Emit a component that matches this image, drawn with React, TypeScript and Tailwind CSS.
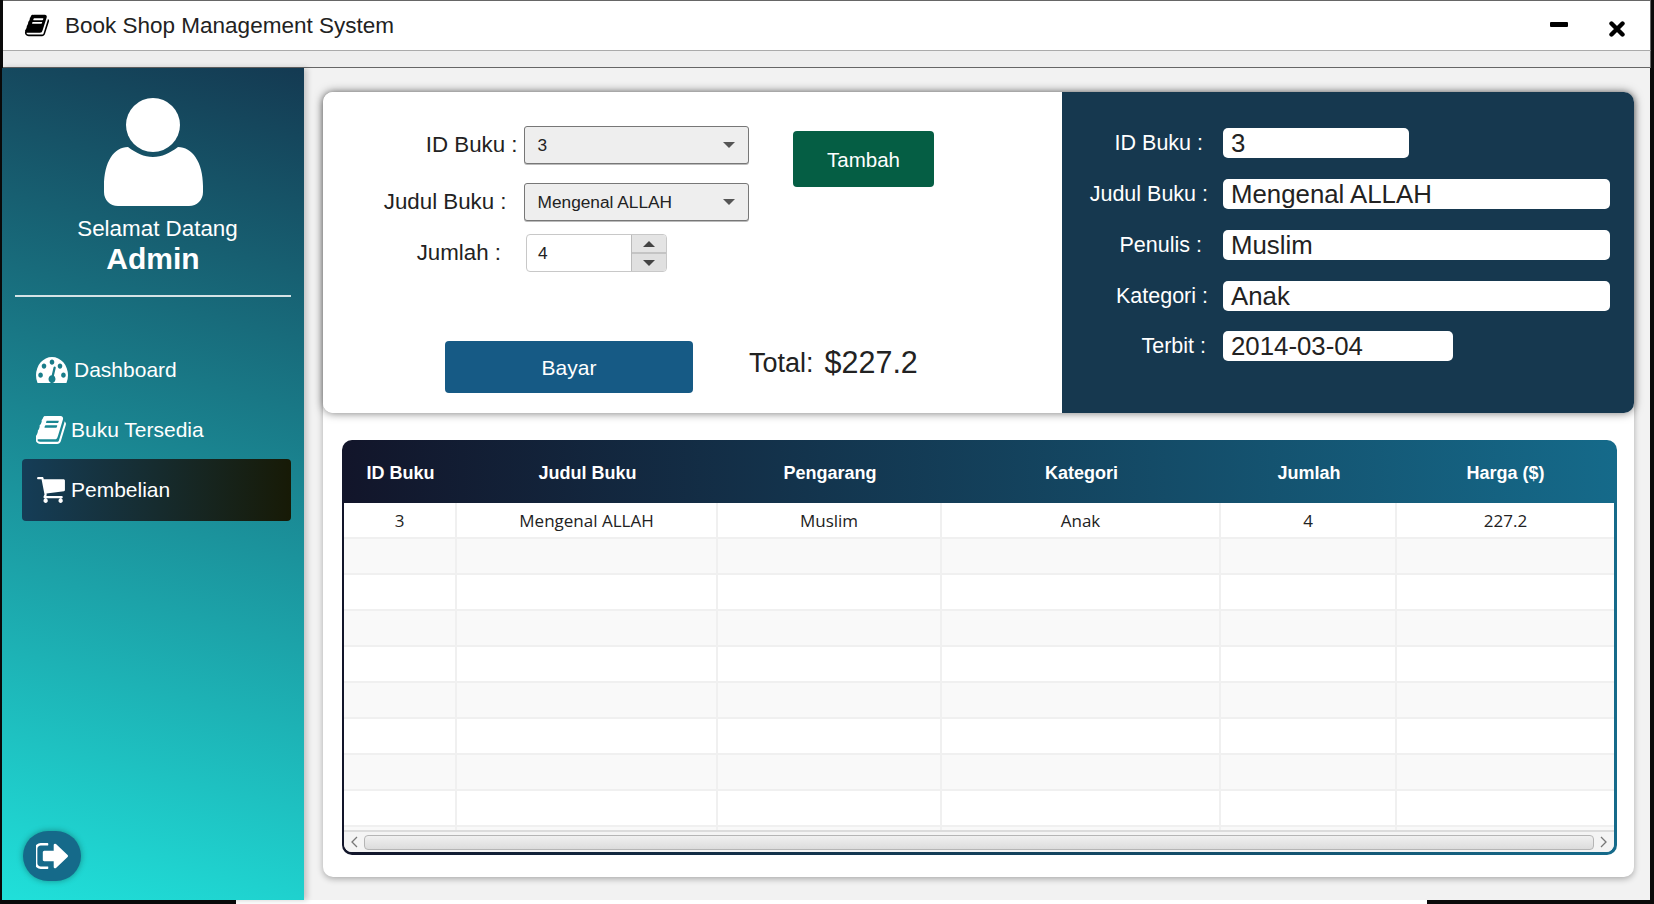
const fontSans = `font-['Liberation_Sans',Arial,sans-serif]`

const bookPath =
  'M1703 478q40 57 18 129l-275 906q-19 64-76.5 107.5t-122.5 43.5h-923q-77 0-148.5-53.5t-99.5-131.5q-24-67-2-127 0-4 3-27t4-37q1-8-3-21.5t-3-19.5q2-11 8-21t16.5-23.5 16.5-23.5q23-38 45-91.5t30-91.5q3-10 .5-30t-.5-28q3-11 17-28t17-23q21-36 42-92t25-90q1-9-2.5-32t.5-28q4-13 22-30.5t22-22.5q19-26 42.5-84.5t27.5-96.5q1-8-3-25.5t-2-26.5q2-8 9-18t18-23 17-21q8-12 16.5-30.5t15-35 16-36 19.5-32 26.5-23.5 36-11.5 47.5 5.5l-1 3q38-9 51-9h761q74 0 114 56t18 130l-274 906q-36 119-71.5 153.5t-128.5 34.5h-869q-27 0-38 15-11 16-1 43 24 70 144 70h923q29 0 56-15.5t35-41.5l300-987q7-22 5-57 38 15 59 43zm-1064 2q-4 13 2 22.5t20 9.5h608q13 0 25.5-9.5t16.5-22.5l21-64q4-13-2-22.5t-20-9.5h-608q-13 0-25.5 9.5t-16.5 22.5zm-83 256q-4 13 2 22.5t20 9.5h608q13 0 25.5-9.5t16.5-22.5l21-64q4-13-2-22.5t-20-9.5h-608q-13 0-25.5 9.5t-16.5 22.5z'
const dashboardPath =
  'M384 1152q0-53-37.5-90.5t-90.5-37.5-90.5 37.5-37.5 90.5 37.5 90.5 90.5 37.5 90.5-37.5 37.5-90.5zm192-448q0-53-37.5-90.5t-90.5-37.5-90.5 37.5-37.5 90.5 37.5 90.5 90.5 37.5 90.5-37.5 37.5-90.5zm428 481l101-382q6-26-7.5-48.5t-38.5-29.5-48 6.5-30 39.5l-101 382q-60 5-107 43.5t-63 98.5q-20 77 20 146t117 89 146-20 89-117q16-60-6-117t-72-91zm660-33q0-53-37.5-90.5t-90.5-37.5-90.5 37.5-37.5 90.5 37.5 90.5 90.5 37.5 90.5-37.5 37.5-90.5zm-640-640q0-53-37.5-90.5t-90.5-37.5-90.5 37.5-37.5 90.5 37.5 90.5 90.5 37.5 90.5-37.5 37.5-90.5zm448 192q0-53-37.5-90.5t-90.5-37.5-90.5 37.5-37.5 90.5 37.5 90.5 90.5 37.5 90.5-37.5 37.5-90.5zm320 448q0 261-141 483-19 29-54 29h-1402q-35 0-54-29-141-221-141-483 0-182 71-348t191-286 286-191 348-71 348 71 286 191 191 286 71 348z'
const cartPath =
  'M704 1536q0 52-38 90t-90 38-90-38-38-90 38-90 90-38 90 38 38 90zm896 0q0 52-38 90t-90 38-90-38-38-90 38-90 90-38 90 38 38 90zm128-1088v512q0 24-16.5 42.5t-40.5 21.5l-1044 122q13 60 13 70 0 16-24 64h920q26 0 45 19t19 45-19 45-45 19h-1024q-26 0-45-19t-19-45q0-11 8-31.5t16-36 21.5-40 15.5-29.5l-177-823h-204q-26 0-45-19t-19-45 19-45 45-19h256q16 0 28.5 6.5t19.5 15.5 13 24.5 8 26 5.5 29.5 4.5 26h1201q26 0 45 19t19 45z'
const signOutPath =
  'M704 1440q0 4 1 20t.5 26.5-3 23.5-10 19.5-20.5 6.5h-320q-119 0-203.5-84.5t-84.5-203.5v-704q0-119 84.5-203.5t203.5-84.5h320q13 0 22.5 9.5t9.5 22.5q0 4 1 20t.5 26.5-3 23.5-10 19.5-20.5 6.5h-320q-66 0-113 47t-47 113v704q0 66 47 113t113 47h312l11.5 1 11.5 3 8 5.5 7 9 2 13.5zm928-544q0 26-19 45l-544 544q-19 19-45 19t-45-19-19-45v-288h-448q-26 0-45-19t-19-45v-384q0-26 19-45t45-19h448v-288q0-26 19-45t45-19 45 19l544 544q19 19 19 45z'

function Icon({ d, box = '0 0 1792 1792', className }: { d: string; box?: string; className: string }) {
  return (
    <svg viewBox={box} preserveAspectRatio="none" className={className} fill="currentColor">
      <path d={d} />
    </svg>
  )
}

function Caret() {
  return <div className="w-0 h-0 border-x-[6px] border-x-transparent border-t-[6px] border-t-[#555]" />
}

function SelectBox({ value }: { value: string }) {
  return (
    <div className="w-[226px] h-[38px] flex items-center justify-between px-[13px] bg-[#eeeeee] border border-[#777] rounded-[3px] text-[17.3px] text-[#222] shadow-[0_1px_0_#bbb]">
      <span className="pt-[2px]">{value}</span>
      <Caret />
    </div>
  )
}

function Spinner() {
  return (
    <div className="w-[141px] h-[38px] flex border border-[#c8c8c8] rounded-[4px] bg-white overflow-hidden">
      <div className="flex-1 pl-[11px] pt-[1px] flex items-center text-[17.3px] text-[#222]">4</div>
      <div className="w-[35px] flex flex-col border-l border-[#bbb]">
        <div className="flex-1 flex items-center justify-center bg-[#e4e4e4] border-b-2 border-[#c4c4c4]">
          <div className="w-0 h-0 border-x-[6px] border-x-transparent border-b-[6px] border-b-[#444]" />
        </div>
        <div className="flex-1 flex items-center justify-center bg-[#e0e0e0]">
          <div className="w-0 h-0 border-x-[6px] border-x-transparent border-t-[6px] border-t-[#444]" />
        </div>
      </div>
    </div>
  )
}

function InfoRow({ label, value, pr, width }: { label: string; value: string; pr: string; width: string }) {
  return (
    <div className="flex h-[30px] items-center">
      <div className={`w-[161px] text-right text-[21.5px] text-white ${pr}`}>{label}</div>
      <div className={`h-[30px] bg-white rounded-[5px] pl-[8px] flex items-center text-[25.8px] text-[#222] ${width}`}>
        {value}
      </div>
    </div>
  )
}

const columns = 'grid grid-cols-[113px_261px_224px_279px_176px_217px]'
const headers = ['ID Buku', 'Judul Buku', 'Pengarang', 'Kategori', 'Jumlah', 'Harga ($)']
const emptyRows = [0, 1, 2, 3, 4, 5, 6, 7, 8]

function Cell({ children }: { children?: React.ReactNode }) {
  return (
    <div className="flex items-center justify-center pt-[1px] border-r-2 border-[#f0f0f0] last:border-r-0 text-[17px] text-[#222] font-['Open_Sans',sans-serif]">
      {children}
    </div>
  )
}

export default function App() {
  const row = ['3', 'Mengenal ALLAH', 'Muslim', 'Anak', '4', '227.2']

  return (
    <div className={`w-[1654px] h-[904px] bg-[#0a0a0a] flex flex-col overflow-hidden ${fontSans}`}>
      {/* TITLE BAR */}
      <header className="w-[1648px] ml-[3px] flex-none">
        <div className="h-[51px] bg-white border-t border-t-[#666] border-r border-r-[#666] border-b border-b-[#aaa] flex items-center text-[#222]">
          <Icon d={bookPath} className="ml-[21px] w-[26px] h-[25px] text-black" />
          <span className="ml-[15px] text-[22.5px]">Book Shop Management System</span>
          <div className="ml-auto mr-[41px] w-[18px] h-[5px] -mt-[2px] bg-black rounded-[1px]" />
          <svg viewBox="0 0 16 16" className="mr-[25px] mt-[6px] w-[16px] h-[16px]" fill="none" stroke="black" strokeWidth="4.4" strokeLinecap="round">
            <path d="M2.5 2.5l11 11M13.5 2.5l-11 11" />
          </svg>
        </div>
        <div className="h-[17px] bg-[#eeeeee] border-r border-r-[#666] border-b border-b-[#666]" />
      </header>

      {/* BODY */}
      <div className="flex-1 flex pl-[2px] pr-[4px] min-h-0">
        {/* SIDEBAR */}
        <aside className="relative z-10 flex-none w-[302px] flex flex-col bg-[linear-gradient(15deg,#20e0da_0%,#1a8490_55%,#143a52_100%)] shadow-[3px_0_6px_rgba(0,0,0,0.2)]">
          <div className="flex flex-col items-center pt-[30px]">
            <svg viewBox="0 0 99 108" className="w-[99px] h-[108px] text-white" fill="currentColor">
              <circle cx="49" cy="27" r="27" />
              <path d="M24 49C32 55 40 59 49 59C58 59 66 55 74 49C88 49 99 64 99 88V94C99 102 93 108 85 108H14C6 108 0 102 0 94V88C0 64 10 49 24 49Z" />
            </svg>
            <div className="mt-[10px] ml-[9px] text-[22.4px] leading-[26px] text-white">Selamat Datang</div>
            <div className="text-[30px] leading-[34px] font-bold text-white">Admin</div>
          </div>
          <div className="mt-[19px] mx-[13px] h-[2px] bg-[#d5e3e6]" />

          <nav className="mt-[58px] flex flex-col text-white text-[21px]">
            <div className="flex items-center h-[30px] pl-[34px]">
              <Icon d={dashboardPath} box="0 256 1792 1280" className="w-[32px] h-[26px]" />
              <span className="ml-[6px]">Dashboard</span>
            </div>
            <div className="flex items-center h-[30px] pl-[34px] mt-[30px]">
              <Icon d={bookPath} box="90 128 1640 1536" className="w-[30px] h-[28px]" />
              <span className="ml-[5px]">Buku Tersedia</span>
            </div>
            <div className="flex items-center h-[62px] ml-[20px] mr-[13px] pl-[14px] mt-[14px] rounded-[4px] bg-[linear-gradient(to_right,#153d57,#171a06)]">
              <Icon d={cartPath} box="0 256 1792 1408" className="w-[30px] h-[26px]" />
              <span className="ml-[5px]">Pembelian</span>
            </div>
          </nav>

          <div className="mt-auto mb-[19px] ml-[21px] w-[58px] h-[50px] rounded-full bg-[#156a8a] shadow-[0_0_6px_rgba(0,0,0,0.35)] flex items-center justify-center">
            <Icon d={signOutPath} box="128 256 1504 1280" className="w-[32px] h-[26px] text-white" />
          </div>
        </aside>

        {/* MAIN */}
        <main className="flex-1 min-w-0 bg-[#f2f2f2] pl-[19px] pr-[16px] pt-[24px] pb-[23px] flex flex-col">
          <div className="flex-1 flex flex-col bg-white rounded-[10px] shadow-[0_2px_6px_rgba(0,0,0,0.3)]">
            {/* TOP PANEL */}
            <section className="relative h-[321px] flex rounded-[10px] shadow-[0_0_10px_rgba(0,0,0,0.55)]">
              <div className="w-[739px] bg-white rounded-l-[10px] text-[#222]">
                <div className="flex">
                  <div className="w-[426px] pt-[34px] text-[22.3px]">
                    <div className="flex items-center">
                      <div className="w-[201px] pr-[6px] text-right">ID Buku :</div>
                      <SelectBox value="3" />
                    </div>
                    <div className="flex items-center mt-[19px]">
                      <div className="w-[201px] pr-[17px] text-right">Judul Buku :</div>
                      <SelectBox value="Mengenal ALLAH" />
                    </div>
                    <div className="flex items-center mt-[13px]">
                      <div className="w-[203px] pr-[25px] text-right">Jumlah :</div>
                      <Spinner />
                    </div>
                  </div>
                  <button className="ml-[44px] mt-[39px] w-[141px] h-[56px] pt-[2px] rounded-[4px] bg-[#055e44] text-white text-[20.5px]">
                    Tambah
                  </button>
                </div>
                <div className="flex items-center mt-[69px] pl-[122px]">
                  <button className="w-[248px] h-[52px] pt-[2px] rounded-[4px] bg-[#165a85] text-white text-[21px]">Bayar</button>
                  <div className="ml-[56px] -mt-[8px] text-[27px]">Total:</div>
                  <div className="ml-[11px] -mt-[8px] text-[30.5px]">$227.2</div>
                </div>
              </div>
              <div className="flex-1 bg-[#16384f] rounded-r-[10px] pt-[36px] flex flex-col gap-[21px]">
                <InfoRow label="ID Buku :" value="3" pr="pr-[20px]" width="w-[186px]" />
                <InfoRow label="Judul Buku :" value="Mengenal ALLAH" pr="pr-[15px]" width="w-[387px]" />
                <InfoRow label="Penulis :" value="Muslim" pr="pr-[21px]" width="w-[387px]" />
                <InfoRow label="Kategori :" value="Anak" pr="pr-[15px]" width="w-[387px]" />
                <div className="-mt-[1px]">
                  <InfoRow label="Terbit :" value="2014-03-04" pr="pr-[17px]" width="w-[230px]" />
                </div>
              </div>
            </section>

            {/* TABLE */}
            <section className="mt-[27px] ml-[19px] mr-[17px] h-[415px] rounded-[10px] pl-[2px] pr-[3px] pb-[3px] bg-[linear-gradient(to_right,#12152a,#156a8a)] flex flex-col overflow-hidden">
              <div className={`${columns} h-[63px] pt-[4px] flex-none items-center text-center text-white font-bold text-[18px]`}>
                {headers.map((h) => (
                  <div key={h}>{h}</div>
                ))}
              </div>
              <div className="flex-1 bg-white overflow-hidden flex flex-col rounded-b-[8px] min-h-0">
                <div className="flex-1 overflow-hidden">
                  <div className={`${columns} h-[36px] bg-white border-b-2 border-[#f0f0f0]`}>
                    {row.map((c, i) => (
                      <Cell key={i}>{c}</Cell>
                    ))}
                  </div>
                  {emptyRows.map((r) => (
                    <div
                      key={r}
                      className={`${columns} h-[36px] border-b-2 border-[#f0f0f0] ${r % 2 === 0 ? 'bg-[#f9f9f9]' : 'bg-white'}`}
                    >
                      {headers.map((h) => (
                        <Cell key={h} />
                      ))}
                    </div>
                  ))}
                </div>
                <div className="h-[22px] flex-none flex items-center bg-[#f4f4f4] border-t-2 border-[#dcdcdc] px-[6px] gap-[6px]">
                  <svg viewBox="0 0 8 12" className="w-[8px] h-[12px]" fill="none" stroke="#777" strokeWidth="1.3">
                    <path d="M7 1L2 6l5 5" />
                  </svg>
                  <div className="flex-1 h-[15px] rounded-[4px] border border-[#b5b5b5] bg-[linear-gradient(to_bottom,#f0f0f0,#dcdcdc)]" />
                  <svg viewBox="0 0 8 12" className="w-[8px] h-[12px]" fill="none" stroke="#777" strokeWidth="1.3">
                    <path d="M1 1l5 5-5 5" />
                  </svg>
                </div>
              </div>
            </section>
          </div>
        </main>
      </div>

      {/* BOTTOM STRIP */}
      <div className="h-[4px] flex-none flex">
        <div className="w-[236px]" />
        <div className="w-[1191px] bg-white" />
      </div>
    </div>
  )
}
